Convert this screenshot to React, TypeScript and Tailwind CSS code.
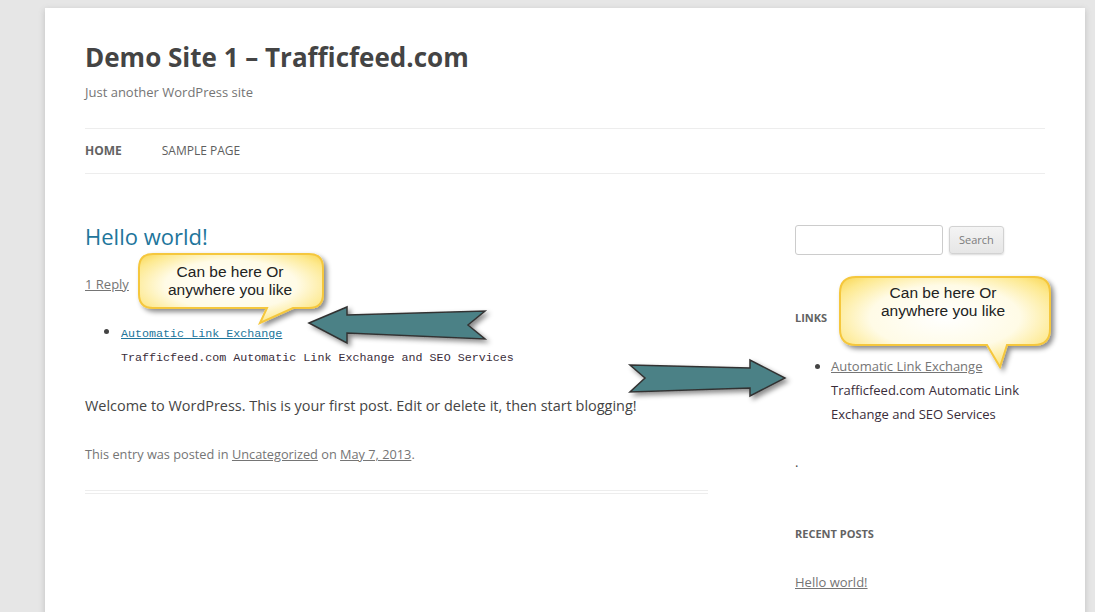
import React from "react";

const sans = { fontFamily: '"Open Sans", "Noto Sans", sans-serif' };
const mono = { fontFamily: '"Liberation Mono", "DejaVu Sans Mono", monospace' };
const arial = { fontFamily: '"Liberation Sans", Arial, sans-serif' };

function Overlay() {
  return (
    <>
      <svg className="absolute left-0 top-0 pointer-events-none" width={1095} height={612} viewBox="0 0 1095 612">
        <defs>
          <radialGradient id="cg" cx="50%" cy="45%" r="65%">
            <stop offset="0%" stopColor="#ffffff" />
            <stop offset="55%" stopColor="#fffbe6" />
            <stop offset="85%" stopColor="#fde98f" />
            <stop offset="100%" stopColor="#f9d85a" />
          </radialGradient>
          <filter id="sh" x="-20%" y="-20%" width="140%" height="160%">
            <feDropShadow dx="3" dy="3" stdDeviation="2.5" floodColor="#000" floodOpacity="0.45" />
          </filter>
        </defs>
        <path
          d="M153,254 H309 Q323,254 323,268 V294 Q323,308 309,308 H293 L260,323 L267,308 H153 Q139,308 139,294 V268 Q139,254 153,254 Z"
          fill="url(#cg)"
          stroke="#f5c73c"
          strokeWidth="2"
          filter="url(#sh)"
        />
        <path
          d="M856,277 H1034 Q1050,277 1050,293 V329 Q1050,345 1034,345 H1007 L1000,367 L987,345 H856 Q840,345 840,329 V293 Q840,277 856,277 Z"
          fill="url(#cg)"
          stroke="#f5c73c"
          strokeWidth="2"
          filter="url(#sh)"
        />
        <path
          d="M309,323 L347,307 L347,315 L485,311 L468,325 L485,339 L347,333 L347,343 Z"
          fill="#4b8186"
          stroke="#333"
          strokeWidth="1.5"
          strokeLinejoin="miter"
          filter="url(#sh)"
        />
        <path
          d="M630,365 L750,368 L750,360 L785,378 L750,396 L750,388 L630,392 L645,378 Z"
          fill="#4b8186"
          stroke="#333"
          strokeWidth="1.5"
          filter="url(#sh)"
        />
      </svg>
      <div
        className="absolute left-[137px] top-[263px] w-[186px] text-center text-[15.5px] leading-[18px] text-[#222]"
        style={arial}
      >
        Can be here Or
        <br />
        anywhere you like
      </div>
      <div
        className="absolute left-[838px] top-[284px] w-[210px] text-center text-[15.5px] leading-[18px] text-[#222]"
        style={arial}
      >
        Can be here Or
        <br />
        anywhere you like
      </div>
    </>
  );
}

export default function App() {
  return (
    <div className="relative w-[1095px] h-[612px] overflow-hidden bg-[#e6e6e6]" style={sans}>
      <div className="ml-[45px] mt-[8px] w-[1040px] h-[620px] bg-white shadow-[0_2px_6px_rgba(100,100,100,0.3)] px-[40px]">
        <header className="pt-[31px]">
          <h1 className="text-[26px] leading-[36px] font-bold text-[#444]">Demo Site 1 – Trafficfeed.com</h1>
          <div className="mt-[5px] text-[13px] leading-[24px] text-[#757575]">Just another WordPress site</div>
          <nav className="mt-[24px] h-[46px] border-t border-b border-[#ededed] flex items-center gap-[40px] text-[12px] uppercase text-[#5e5e5e]">
            <span className="font-bold text-[#636363]">Home</span>
            <span>Sample Page</span>
          </nav>
        </header>
        <div className="flex justify-between">
          <main className="w-[623px] pt-[47px]">
            <h2 className="text-[22px] leading-[30px] text-[#21759b]">Hello world!</h2>
            <div className="mt-[21px] text-[13px] leading-[24px] text-[#757575]">
              <span className="underline">1 Reply</span>
            </div>
            <ul className="mt-[24px] pl-[36px] list-disc text-[#444] marker:text-[#444]">
              <li className="text-[14px] leading-[24px]">
                <span className="text-[11.7px] text-[#21759b] underline" style={mono}>
                  Automatic Link Exchange
                </span>
              </li>
            </ul>
            <div className="pl-[36px] text-[11.7px] leading-[24px] text-[#3a2d3a]" style={mono}>
              Trafficfeed.com Automatic Link Exchange and SEO Services
            </div>
            <p className="mt-[24px] text-[14.45px] leading-[24px] text-[#444]">
              Welcome to WordPress. This is your first post. Edit or delete it, then start blogging!
            </p>
            <p className="mt-[24px] text-[12.75px] leading-[24px] text-[#757575]">
              This entry was posted in <span className="underline">Uncategorized</span> on{" "}
              <span className="underline">May 7, 2013</span>.
            </p>
            <div className="mt-[24px] border-t border-b border-[#ededed] h-[4px]" />
          </main>
          <aside className="w-[250px] pt-[51px]">
            <div className="flex items-center gap-[6px]">
              <div className="w-[148px] h-[30px] border border-[#ccc] rounded-[3px] bg-white" />
              <div className="h-[28px] px-[9px] flex items-center border border-[#d2d2d2] rounded-[3px] bg-gradient-to-b from-[#f4f4f4] to-[#e6e6e6] text-[11px] text-[#7c7c7c] shadow-[0_1px_2px_rgba(0,0,0,0.15)]">
                Search
              </div>
            </div>
            <h3 className="mt-[54px] text-[11px] leading-[18px] font-bold uppercase text-[#636363]">Links</h3>
            <ul className="mt-[27px] pl-[36px] list-disc text-[13px] leading-[24px] text-[#444]">
              <li>
                <span className="underline text-[#757575]">Automatic Link Exchange</span>
              </li>
            </ul>
            <div className="pl-[36px] text-[13px] leading-[24px] text-[#3a2d3a]">
              Trafficfeed.com Automatic Link Exchange and SEO Services
            </div>
            <div className="mt-[24px] text-[13px] leading-[24px] text-[#444]">.</div>
            <h3 className="mt-[51px] text-[11px] leading-[18px] font-bold uppercase text-[#636363]">Recent Posts</h3>
            <div className="mt-[27px] text-[13px] leading-[24px] text-[#757575] underline">Hello world!</div>
          </aside>
        </div>
      </div>
      <Overlay />
    </div>
  );
}
